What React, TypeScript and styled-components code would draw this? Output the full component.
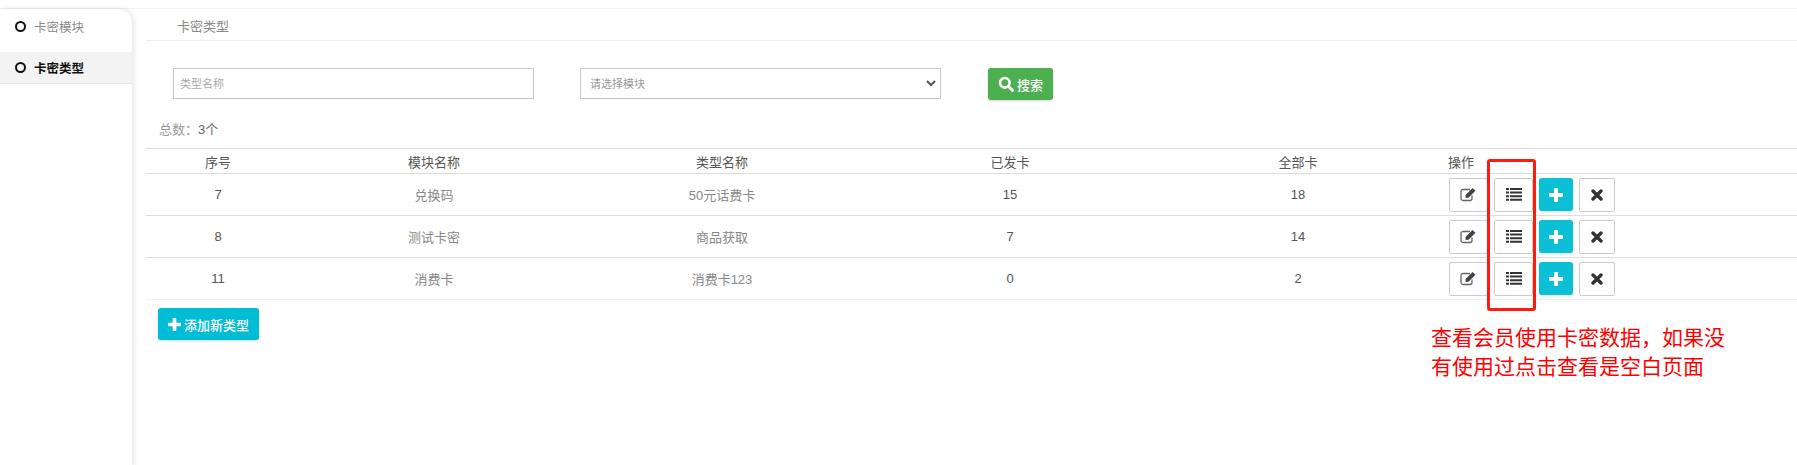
import * as React from 'react';
import styled, { createGlobalStyle } from 'styled-components';

const GlobalStyle = createGlobalStyle`
  html, body {
    margin: 0;
    padding: 0;
    background: #fff;
  }

  body {
    font-family: "Liberation Sans", "Noto Sans CJK SC", sans-serif;
    font-size: 13px;
    color: #676a6c;
  }
`;

const Page = styled.div`
  position: relative;
  width: 1797px;
  height: 465px;
  overflow: hidden;
  box-sizing: border-box;
  padding-top: 8px;
`;

const Frame = styled.div`
  display: flex;
  height: 457px;
  border-top: 1px solid #f0f0f0;
`;

const Sidebar = styled.nav`
  flex: 0 0 132px;
  border-top-right-radius: 14px;
  box-shadow: 2px 0 5px rgba(0, 0, 0, 0.1);
`;

const SideItem = styled.div<{ $active?: boolean }>`
  display: flex;
  align-items: center;
  gap: 8px;
  height: ${props => (props.$active ? '32px' : '43px')};
  padding: ${props => (props.$active ? '0 0 0 15px' : '0 0 8px 15px')};
  box-sizing: border-box;
  background: ${props => (props.$active ? '#f3f3f4' : 'transparent')};
  color: ${props => (props.$active ? '#111' : '#888')};
  font-size: 12.5px;
  font-weight: ${props => (props.$active ? 700 : 400)};
  border-bottom: ${props => (props.$active ? '1px solid #e7e7e7' : 'none')};
`;

const Ring = styled.span`
  width: 11px;
  height: 11px;
  box-sizing: border-box;
  border: 2px solid #111;
  border-radius: 50%;
`;

const Main = styled.main`
  flex: 1;
  margin-left: 14px;
`;

const Crumb = styled.div`
  height: 32px;
  box-sizing: border-box;
  padding: 8px 0 0 31px;
  border-bottom: 1px solid #eee;
  line-height: 20px;
  color: #888;
`;

const SearchBar = styled.div`
  display: flex;
  align-items: flex-start;
  margin-top: 27px;
  padding-left: 27px;
`;

const TextField = styled.input`
  width: 361px;
  height: 31px;
  box-sizing: border-box;
  border: 1px solid #c8c8c8;
  padding: 0 6px;
  font: 11px "Liberation Sans", "Noto Sans CJK SC", sans-serif;
  outline: none;

  &::placeholder {
    color: #aaa;
  }
`;

const SelectBox = styled.select`
  appearance: none;
  width: 361px;
  height: 31px;
  margin-left: 46px;
  box-sizing: border-box;
  background: #fff url("data:image/svg+xml,%3Csvg xmlns='http://www.w3.org/2000/svg' width='10' height='7' fill='none' stroke='%23555' stroke-width='2'%3E%3Cpath d='M1 1l4 4 4-4'/%3E%3C/svg%3E") no-repeat right 4px center;
  border: 1px solid #c8c8c8;
  border-radius: 0;
  padding: 0 9px;
  font: 11px "Liberation Sans", "Noto Sans CJK SC", sans-serif;
  color: #999;
  outline: none;
`;

const Button = styled.button<{ $color: string }>`
  display: inline-flex;
  align-items: center;
  justify-content: center;
  gap: 3px;
  padding: 0;
  border: none;
  border-radius: 3px;
  background: ${props => props.$color};
  color: #fff;
  font: 500 13px "Liberation Sans", "Noto Sans CJK SC", sans-serif;
  box-shadow: 0 1px 3px rgba(0, 0, 0, 0.16);
`;

const SearchButton = styled(Button)`
  width: 65px;
  height: 32px;
  margin-left: 47px;
`;

const Total = styled.div`
  margin: 20px 0 0 13px;
  height: 19px;
  line-height: 19px;
  color: #999;

  b {
    font-weight: 400;
    color: #666;
  }
`;

const Table = styled.div`
  margin-top: 9px;
  border-top: 1px solid #ddd;
`;

const Row = styled.div<{ $head?: boolean; $last?: boolean }>`
  display: grid;
  grid-template-columns: 144px 288px 288px 288px 288px 1fr;
  align-items: center;
  box-sizing: border-box;
  height: ${props => (props.$head ? '25px' : '42px')};
  border-bottom: 1px solid ${props => (props.$last ? '#f0f0f0' : '#ddd')};
  color: ${props => (props.$head ? '#555' : '#888')};
`;

const Cell = styled.div<{ $dark?: boolean }>`
  text-align: center;
  color: ${props => (props.$dark ? '#555' : 'inherit')};
`;

const Actions = styled.div`
  display: flex;
  align-items: center;
  gap: 6px;
  padding-left: 7px;
`;

const HeadAction = styled.div`
  padding-left: 6px;
`;

const IconButton = styled.button<{ $wide?: boolean }>`
  display: flex;
  align-items: center;
  justify-content: center;
  width: ${props => (props.$wide ? '39px' : '36px')};
  height: 34px;
  padding: 0;
  background: #fff;
  border: 1px solid #ccc;
  border-radius: 2px;
`;

const PlusButton = styled(Button)`
  width: 34px;
  height: 33px;
`;

const AddButton = styled(Button)`
  width: 101px;
  height: 32px;
  margin: 8px 0 0 12px;
`;

const RedBox = styled.div`
  position: absolute;
  left: 1487px;
  top: 159px;
  width: 49px;
  height: 152px;
  box-sizing: border-box;
  border: 3px solid #ff1a0d;
  border-radius: 3px;
  pointer-events: none;
`;

const Note = styled.div`
  position: absolute;
  left: 1431px;
  top: 323px;
  width: 300px;
  font-size: 21px;
  line-height: 29px;
  white-space: nowrap;
  color: #f00;
`;

const SearchIcon = () => (
  <svg width="16" height="16" viewBox="0 0 16 16" fill="none" stroke="#fff">
    <circle cx="6.8" cy="6.8" r="4.8" strokeWidth="2.6" />
    <path d="M10.5 10.5l4 4" strokeWidth="3" strokeLinecap="round" />
  </svg>
);

const EditIcon = () => (
  <svg width="17" height="15" viewBox="0 0 17 15">
    <path d="M12 8.5V11.5a2 2 0 0 1-2 2H3a2 2 0 0 1-2-2V4.5a2 2 0 0 1 2-2H10" fill="none" stroke="#666" strokeWidth="1.3" />
    <path d="M5.5 8l.2 3 2.8-.2 7-7-3-2.8z" fill="#444" />
  </svg>
);

const ListIcon = () => (
  <svg width="16" height="13" viewBox="0 0 16 13" fill="#333">
    <path d="M0 0h3v2H0zM4 0h12v2H4zM0 3.6h3v2H0zM4 3.6h12v2H4zM0 7.2h3v2H0zM4 7.2h12v2H4zM0 10.8h3v2H0zM4 10.8h12v2H4z" />
  </svg>
);

const PlusIcon = ({ size }: { size: number }) => (
  <svg width={size} height={size} viewBox="0 0 14 14" fill="#fff">
    <path d="M5 1a1 1 0 0 1 1-1h2a1 1 0 0 1 1 1v4h4a1 1 0 0 1 1 1v2a1 1 0 0 1-1 1H9v4a1 1 0 0 1-1 1H6a1 1 0 0 1-1-1V9H1a1 1 0 0 1-1-1V6a1 1 0 0 1 1-1h4z" />
  </svg>
);

const CloseIcon = () => (
  <svg width="12" height="12" viewBox="0 0 12 12" fill="none" stroke="#333" strokeWidth="3.4" strokeLinecap="round">
    <path d="M2 2l8 8M10 2l-8 8" />
  </svg>
);

type CardType = {
  id: number;
  module: string;
  name: string;
  sent: number;
  total: number;
};

const cardTypes: CardType[] = [
  { id: 7, module: '兑换码', name: '50元话费卡', sent: 15, total: 18 },
  { id: 8, module: '测试卡密', name: '商品获取', sent: 7, total: 14 },
  { id: 11, module: '消费卡', name: '消费卡123', sent: 0, total: 2 }
];

export default function App() {
  return (
    <Page>
      <GlobalStyle />
      <Frame>
        <Sidebar>
          <SideItem><Ring />卡密模块</SideItem>
          <SideItem $active={true}><Ring />卡密类型</SideItem>
        </Sidebar>
        <Main>
          <Crumb>卡密类型</Crumb>
          <SearchBar>
            <TextField placeholder="类型名称" />
            <SelectBox defaultValue="">
              <option value="">请选择模块</option>
            </SelectBox>
            <SearchButton $color="#4caf50"><SearchIcon />搜索</SearchButton>
          </SearchBar>
          <Total>总数：<b>3个</b></Total>
          <Table>
            <Row $head={true}>
              <Cell>序号</Cell>
              <Cell>模块名称</Cell>
              <Cell>类型名称</Cell>
              <Cell>已发卡</Cell>
              <Cell>全部卡</Cell>
              <HeadAction>操作</HeadAction>
            </Row>
            {cardTypes.map((card, index) => (
              <Row key={card.id} $last={index === cardTypes.length - 1}>
                <Cell $dark={true}>{card.id}</Cell>
                <Cell>{card.module}</Cell>
                <Cell>{card.name}</Cell>
                <Cell $dark={true}>{card.sent}</Cell>
                <Cell $dark={true}>{card.total}</Cell>
                <Actions>
                  <IconButton $wide={true}><EditIcon /></IconButton>
                  <IconButton $wide={true}><ListIcon /></IconButton>
                  <PlusButton $color="#0bbfd6"><PlusIcon size={14} /></PlusButton>
                  <IconButton><CloseIcon /></IconButton>
                </Actions>
              </Row>
            ))}
          </Table>
          <AddButton $color="#00bcd4"><PlusIcon size={13} />添加新类型</AddButton>
        </Main>
      </Frame>
      <RedBox />
      <Note>查看会员使用卡密数据，如果没<br />有使用过点击查看是空白页面</Note>
    </Page>
  );
}
